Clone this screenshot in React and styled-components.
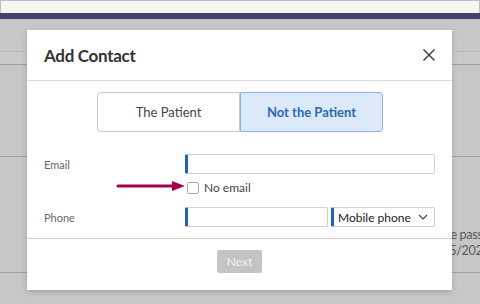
import React from "react";
import styled, { createGlobalStyle } from "styled-components";

const Global = createGlobalStyle`
  html, body { margin: 0; padding: 0; }
  body {
    width: 480px; height: 304px; overflow: hidden;
    background: #c7c7c7;
    font-family: Lato, "Open Sans", "Liberation Sans", sans-serif;
  }
`;

const Page = styled.div`
  position: relative;
  width: 480px;
  height: 304px;
  overflow: hidden;
  background: #c7c7c7;
`;

const TopBar = styled.div`
  height: 12px;
  background: #f7f7f2;
  border: 1px solid #bdbdbd;
  border-bottom: none;
`;

const Band = styled.div`
  height: 6px;
  background: #4e3d6f;
`;

const BgRow = styled.div`
  height: ${(p) => p.$h}px;
  border-bottom: 1px solid ${(p) => p.$line || "#a3a3a3"};
  background: ${(p) => p.$bg || "transparent"};
  box-sizing: border-box;
  position: relative;
`;

const BgText = styled.div`
  position: absolute;
  left: ${(p) => p.$left}px;
  top: ${(p) => p.$top}px;
  font-size: 12.5px;
  letter-spacing: -0.3px;
  line-height: 15px;
  color: #5a5a5a;
  white-space: nowrap;
`;

const Modal = styled.div`
  position: absolute;
  left: 27px;
  top: 30px;
  width: 425px;
  height: 260px;
  background: #fff;
  box-shadow: 0 2px 6px rgba(0, 0, 0, 0.18);
  display: flex;
  flex-direction: column;
`;

const Header = styled.div`
  height: 50px;
  flex: none;
  display: flex;
  align-items: center;
  justify-content: space-between;
  padding: 0 17px;
  border-bottom: 1px solid #dcdcdc;
`;

const Title = styled.h2`
  margin: 0;
  font-size: 17px;
  font-weight: 700;
  color: #333;
  letter-spacing: -0.3px;
  padding-top: 1px;
`;

const CloseBtn = styled.button`
  border: none;
  background: none;
  padding: 0;
  width: 12px;
  height: 12px;
  display: flex;
  cursor: pointer;
`;

const Body = styled.div`
  flex: 1;
  padding: 11px 17px 0;
  display: flex;
  flex-direction: column;
`;

const Toggle = styled.div`
  display: flex;
  justify-content: center;
  margin-left: 1px;
`;

const ToggleBtn = styled.button`
  width: 143px;
  height: 40px;
  box-sizing: border-box;
  font-family: inherit;
  font-size: 13px;
  border: 1px solid ${(p) => (p.$active ? "#8db2df" : "#c9c9c9")};
  background: ${(p) => (p.$active ? "#dbe9f8" : "#fff")};
  color: ${(p) => (p.$active ? "#2b68b3" : "#444")};
  font-weight: ${(p) => (p.$active ? 700 : 400)};
  border-radius: ${(p) => (p.$left ? "4px 0 0 4px" : "0 4px 4px 0")};
  padding: 0;
`;

const Row = styled.div`
  display: flex;
  align-items: center;
  margin-top: ${(p) => p.$mt}px;
`;

const Label = styled.div`
  width: 141px;
  flex: none;
  font-size: 11px;
  color: #666;
`;

const Field = styled.div`
  box-sizing: border-box;
  width: ${(p) => p.$w}px;
  height: 20px;
  border: 1px solid #cfcfcf;
  border-left: 3px solid #1f62b8;
  border-radius: 2px;
  background: #fff;
  display: flex;
  align-items: center;
  justify-content: space-between;
  padding: 0 6px 0 4px;
  font-size: 12px;
  color: #222;
  white-space: nowrap;
`;

const Gap = styled.div`
  width: 3px;
  flex: none;
`;

const CheckRow = styled.div`
  display: flex;
  align-items: center;
  margin-top: 6px;
  position: relative;
  padding-left: 143px;
`;

const Arrow = styled.svg`
  position: absolute;
  left: 72px;
  top: 0;
`;

const Check = styled.span`
  width: 12px;
  height: 12px;
  box-sizing: border-box;
  border: 1px solid #a9a9a9;
  border-radius: 2px;
  background: #fff;
  flex: none;
`;

const CheckText = styled.span`
  margin-left: 5px;
  font-size: 12px;
  color: #444;
`;

const Footer = styled.div`
  height: 52px;
  flex: none;
  border-top: 1px solid #cfcfcf;
  display: flex;
  justify-content: center;
  align-items: flex-start;
  padding-top: 11px;
  box-sizing: border-box;
`;

const NextBtn = styled.button`
  width: 45px;
  height: 23px;
  border: none;
  border-radius: 2px;
  background: #c4c4c4;
  color: #f2f2f2;
  font-family: inherit;
  font-size: 12px;
  padding: 0;
`;

export default function App() {
  return (
    <Page>
      <Global />
      <TopBar />
      <Band />
      <BgRow $h={33} $line="#bdbdbd" />
      <BgRow $h={13} $line="#a0a0a0" $bg="#cacaca" />
      <BgRow $h={92} />
      <BgRow $h={116}>
        <BgText $left={417} $top={70}>Change password</BgText>
        <BgText $left={423} $top={86}>10/15/2023</BgText>
      </BgRow>
      <Modal>
        <Header>
          <Title>Add Contact</Title>
          <CloseBtn aria-label="Close">
            <svg width="12" height="12" viewBox="0 0 12 12">
              <path d="M0.5 0.5 L11.5 11.5 M11.5 0.5 L0.5 11.5" stroke="#444" strokeWidth="1.5" />
            </svg>
          </CloseBtn>
        </Header>
        <Body>
          <Toggle>
            <ToggleBtn $left>The Patient</ToggleBtn>
            <ToggleBtn $active>Not the Patient</ToggleBtn>
          </Toggle>
          <Row $mt={22}>
            <Label>Email</Label>
            <Field $w={250} />
          </Row>
          <CheckRow>
            <Arrow width="70" height="12" viewBox="0 0 70 12">
              <path d="M2 6 H58" stroke="#a3004f" strokeWidth="3" strokeLinecap="round" />
              <path d="M56 1 L69 6 L56 11 Z" fill="#a3004f" />
            </Arrow>
            <Check />
            <CheckText>No email</CheckText>
          </CheckRow>
          <Row $mt={12}>
            <Label>Phone</Label>
            <Field $w={143} />
            <Gap />
            <Field $w={104}>
              Mobile phone
              <svg width="10" height="6" viewBox="0 0 10 6">
                <path d="M1 1 L5 5 L9 1" stroke="#444" strokeWidth="1.2" fill="none" />
              </svg>
            </Field>
          </Row>
        </Body>
        <Footer>
          <NextBtn disabled>Next</NextBtn>
        </Footer>
      </Modal>
    </Page>
  );
}
